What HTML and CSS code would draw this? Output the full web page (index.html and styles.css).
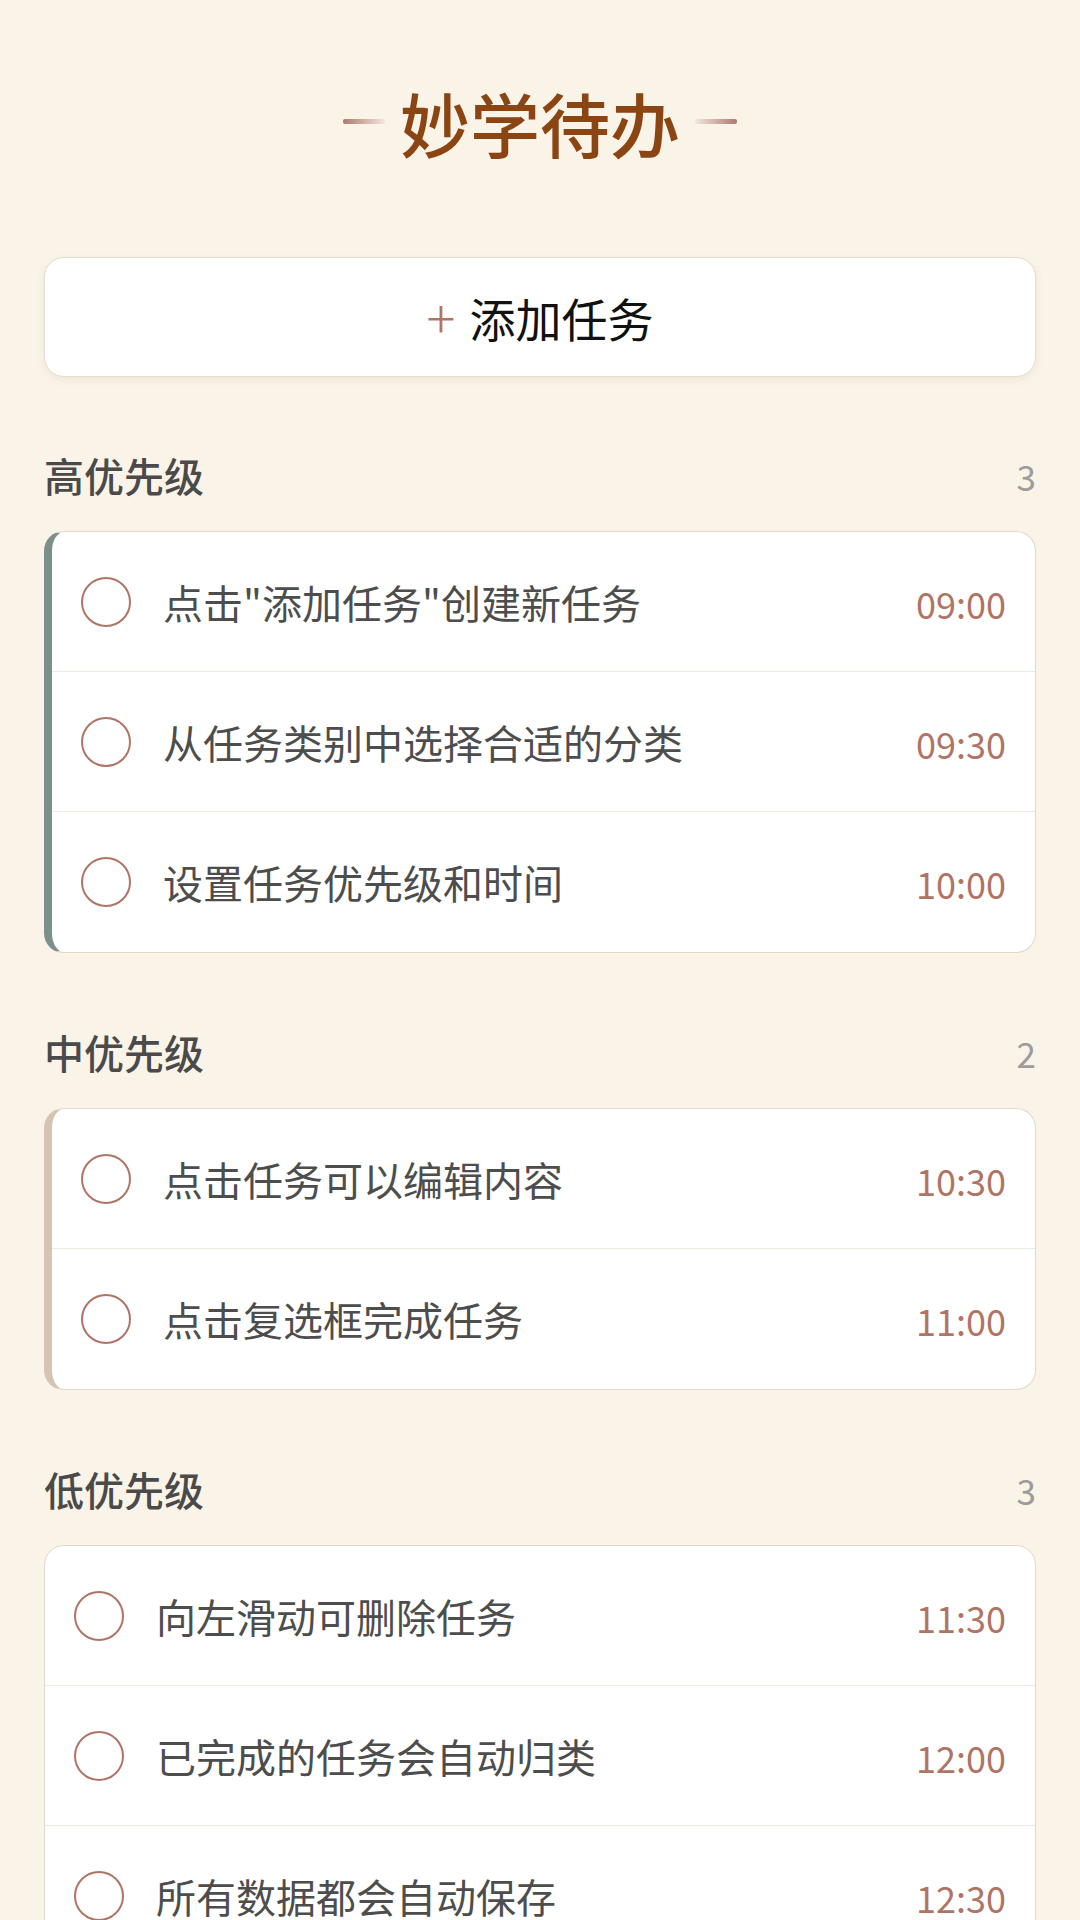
FILE: index.html
```html
<html>
	<head>
		<meta charset="UTF-8">
		<title>妙学待办</title>
		<link rel="stylesheet" href="styles.css">
	</head>
	<body>
		<div id="App">
			<div class="Header">
				<span class="dash left"></span>
				<span class="Title">妙学待办</span>
				<span class="dash right"></span>
			</div>
			<button class="add"><span class="plus">+</span>添加任务</button>

			<div class="section">
				<div class="section-head">
					<span class="name">高优先级</span>
					<span class="count">3</span>
				</div>
				<div class="card high">
					<div class="task"><span class="check"></span><span class="text">点击"添加任务"创建新任务</span><span class="time">09:00</span></div>
					<div class="task"><span class="check"></span><span class="text">从任务类别中选择合适的分类</span><span class="time">09:30</span></div>
					<div class="task"><span class="check"></span><span class="text">设置任务优先级和时间</span><span class="time">10:00</span></div>
				</div>
			</div>

			<div class="section">
				<div class="section-head">
					<span class="name">中优先级</span>
					<span class="count">2</span>
				</div>
				<div class="card medium">
					<div class="task"><span class="check"></span><span class="text">点击任务可以编辑内容</span><span class="time">10:30</span></div>
					<div class="task"><span class="check"></span><span class="text">点击复选框完成任务</span><span class="time">11:00</span></div>
				</div>
			</div>

			<div class="section">
				<div class="section-head">
					<span class="name">低优先级</span>
					<span class="count">3</span>
				</div>
				<div class="card low">
					<div class="task"><span class="check"></span><span class="text">向左滑动可删除任务</span><span class="time">11:30</span></div>
					<div class="task"><span class="check"></span><span class="text">已完成的任务会自动归类</span><span class="time">12:00</span></div>
					<div class="task"><span class="check"></span><span class="text">所有数据都会自动保存</span><span class="time">12:30</span></div>
				</div>
			</div>
		</div>
	</body>
</html>
```

FILE: styles.css
```css
*{
	margin: 0;
	padding: 0;
	box-sizing: border-box;
}
body{
	background: #faf3e8;
	font-family: "Noto Sans CJK SC", "Noto Sans", sans-serif;
	width: 1080px;
	height: 1920px;
	overflow: hidden;
}
#App{
	padding: 73px 44px 0 44px;
}
.Header{
	display: flex;
	align-items: center;
	justify-content: center;
	gap: 15px;
	height: 100px;
	margin-bottom: 84px;
}
.Header .dash{
	width: 42px;
	height: 5px;
	border-radius: 2px;
	margin-top: -4px;
}
.Header .dash.left{
	background: linear-gradient(to right, #b07870, rgba(176,120,112,0.1));
}
.Header .dash.right{
	background: linear-gradient(to right, rgba(176,120,112,0.1), #b07870);
}
.Header .Title{
	font-size: 70px;
	font-weight: 500;
	color: #8b4513;
	line-height: 100px;
}
button.add{
	display: flex;
	align-items: center;
	justify-content: center;
	width: 100%;
	height: 120px;
	background: #fff;
	border: 1px solid #e6dccc;
	border-radius: 20px;
	box-shadow: 0 3px 8px rgba(120,90,50,0.08);
	font-family: "Noto Sans CJK SC", sans-serif;
	font-size: 46px;
	color: #111;
	margin-bottom: 70px;
}
button.add .plus{
	color: #b07466;
	font-size: 54px;
	font-weight: 300;
	margin-right: 14px;
	margin-top: -4px;
}
.section{
	margin-bottom: 71px;
}
.section-head{
	display: flex;
	align-items: center;
	justify-content: space-between;
	height: 56px;
	margin-bottom: 28px;
}
.section-head .name{
	font-size: 40px;
	font-weight: 500;
	color: #4a4a4a;
}
.section-head .count{
	font-size: 35px;
	color: #9c9c9c;
}
.card{
	background: #fff;
	border: 1px solid #e3d8c8;
	border-radius: 20px;
	overflow: hidden;
}
.card.high{
	border-left: 8px solid #7b8f8b;
}
.card.medium{
	border-left: 8px solid #d5c4b4;
}
.task{
	display: flex;
	align-items: center;
	height: 140px;
	padding: 0 29px 0 29px;
	border-bottom: 1px solid #eee9e0;
}
.task:last-child{
	border-bottom: none;
}
.check{
	width: 50px;
	height: 50px;
	border: 2px solid #b07466;
	border-radius: 50%;
	flex-shrink: 0;
	margin-right: 32px;
}
.text{
	flex: 1;
	font-size: 40px;
	color: #4d4d4d;
}
.time{
	font-size: 36px;
	color: #b07466;
	margin-top: 2px;
}
```
